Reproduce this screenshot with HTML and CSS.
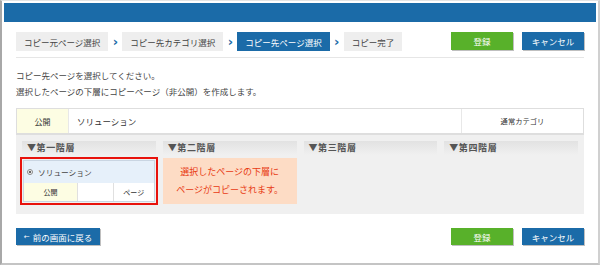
FILE: index.html
```html
<!DOCTYPE html>
<html lang="ja">
<head>
<meta charset="utf-8">
<link rel="stylesheet" href="styles.css">
</head>
<body>
<div class="window">
  <div class="topbar"></div>
  <div class="content">
    <div class="steps-bar">
      <div class="steps">
        <span class="step">コピー元ページ選択</span>
        <span class="chev">›</span>
        <span class="step">コピー先カテゴリ選択</span>
        <span class="chev">›</span>
        <span class="step active">コピー先ページ選択</span>
        <span class="chev">›</span>
        <span class="step">コピー完了</span>
      </div>
      <div class="actions">
        <span class="btn green">登録</span>
        <span class="btn blue">キャンセル</span>
      </div>
    </div>

    <p class="intro">コピー先ページを選択してください。<br>選択したページの下層にコピーページ（非公開）を作成します。</p>

    <div class="cat-row">
      <div class="cat-status">公開</div>
      <div class="cat-name">ソリューション</div>
      <div class="cat-type">通常カテゴリ</div>
    </div>

    <div class="levels">
      <div class="level">
        <div class="level-head">▼第一階層</div>
        <div class="selected">
          <div class="page-card">
            <div class="page-title"><span class="radio"></span>ソリューション</div>
            <div class="page-meta">
              <span class="meta-status">公開</span>
              <span class="meta-blank"></span>
              <span class="meta-type">ページ</span>
            </div>
          </div>
        </div>
      </div>
      <div class="level">
        <div class="level-head">▼第二階層</div>
        <div class="notice">選択したページの下層に<br>ページがコピーされます。</div>
      </div>
      <div class="level">
        <div class="level-head">▼第三階層</div>
      </div>
      <div class="level">
        <div class="level-head">▼第四階層</div>
      </div>
    </div>

    <div class="footer">
      <span class="btn blue back"><span class="arrow">←</span>前の画面に戻る</span>
      <div class="actions">
        <span class="btn green">登録</span>
        <span class="btn blue">キャンセル</span>
      </div>
    </div>
  </div>
</div>
</body>
</html>
```

FILE: styles.css
```css
* { box-sizing: border-box; }
html, body { margin: 0; padding: 0; background: #fff; }
body {
  font-family: "Noto Sans CJK JP", "Noto Sans", sans-serif;
  font-size: 8.5px;
  color: #333;
}
.window {
  width: 600px;
  height: 265px;
  border-left: 2px solid #a8a8a8;
  border-right: 2px solid #d0d0d0;
  border-bottom: 2px solid #c4c4c4;
  border-top: 1px solid #e4e4e4;
  padding: 2px 2px 0 2px;
}
.topbar {
  height: 19px;
  background: #1b6ba8;
}
.content {
  padding: 0 12px;
}
.steps-bar {
  display: flex;
  justify-content: space-between;
  align-items: flex-start;
  margin-top: 10px;
  padding-bottom: 6px;
  border-bottom: 1px solid #e6e6e6;
}
.steps {
  display: flex;
  align-items: center;
}
.step {
  display: flex;
  align-items: center;
  height: 19px;
  padding: 0 8px;
  background: #eeeeee;
  color: #444;
}
.step.active {
  background: #1b6ba8;
  color: #fff;
}
.chev {
  width: 14px;
  text-align: center;
  color: #1b6ba8;
  font-weight: bold;
  font-size: 13px;
  line-height: 19px;
  font-family: "DejaVu Sans", sans-serif;
}
.actions {
  display: flex;
  gap: 9px;
}
.btn {
  display: flex;
  align-items: center;
  justify-content: center;
  width: 62px;
  height: 18px;
  color: #fff;
  box-shadow: 1px 1px 0 rgba(0,0,0,0.25);
}
.btn.green { background: #58b12a; }
.btn.blue { background: #1b6ba8; }
.intro {
  margin: 9px 0 0 0;
  line-height: 16px;
  color: #444;
}
.cat-row {
  display: flex;
  margin-top: 9px;
  height: 27px;
  border: 1px solid #dedede;
  border-bottom-width: 2px;
}
.cat-status {
  width: 52px;
  background: #fdfde3;
  border-right: 1px solid #e8e8e8;
  display: flex;
  align-items: center;
  justify-content: center;
  font-size: 8px;
}
.cat-name {
  flex: 1;
  display: flex;
  align-items: center;
  padding-left: 8px;
  font-size: 8.5px;
}
.cat-type {
  width: 122px;
  border-left: 1px solid #e8e8e8;
  display: flex;
  align-items: center;
  justify-content: center;
  font-size: 7.3px;
}
.levels {
  display: grid;
  grid-template-columns: repeat(4, 1fr);
  gap: 7px;
  background: #f0f0f0;
  padding: 6px 6px 8px 6px;
  height: 79px;
}
.level-head {
  height: 14px;
  background: linear-gradient(#e2e2e2, #f0f0f0);
  color: #555;
  font-weight: bold;
  font-size: 9px;
  line-height: 14px;
  padding-left: 5px;
  letter-spacing: 0.6px;
}
.selected {
  margin: 2px -2px 0 -2px;
  border: 2px solid #e8120c;
  padding: 1px;
  height: 48px;
}
.page-card {
  border: 1px solid #c9d5e2;
  background: #e6f0fa;
}
.page-title {
  display: flex;
  align-items: center;
  height: 22px;
  padding-left: 3px;
  font-size: 7.7px;
  color: #444;
}
.radio {
  width: 6px;
  height: 6px;
  border-radius: 50%;
  border: 1px solid #888;
  background: radial-gradient(circle, #666 0 1.4px, #fff 1.6px);
  margin-right: 5px;
}
.page-meta {
  display: flex;
  height: 18px;
  font-size: 7px;
}
.meta-status {
  width: 53px;
  background: #fdfde3;
  display: flex;
  align-items: center;
  justify-content: center;
}
.meta-blank {
  flex: 1;
  background: #fff;
  border-left: 1px solid #e0e0e0;
  border-right: 1px solid #e0e0e0;
}
.meta-type {
  width: 40px;
  background: #fff;
  display: flex;
  align-items: center;
  justify-content: center;
}
.notice {
  margin-top: 3px;
  height: 46px;
  background: #fddcc5;
  color: #e83a12;
  font-size: 9px;
  line-height: 18px;
  display: flex;
  align-items: center;
  justify-content: center;
  text-align: center;
}
.footer {
  display: flex;
  justify-content: space-between;
  margin-top: 14px;
}
.footer .btn {
  height: 17px;
}
.btn.back {
  width: 84px;
}
.arrow {
  font-family: "DejaVu Sans", sans-serif;
  font-size: 7px;
  margin-right: 3px;
}
```
